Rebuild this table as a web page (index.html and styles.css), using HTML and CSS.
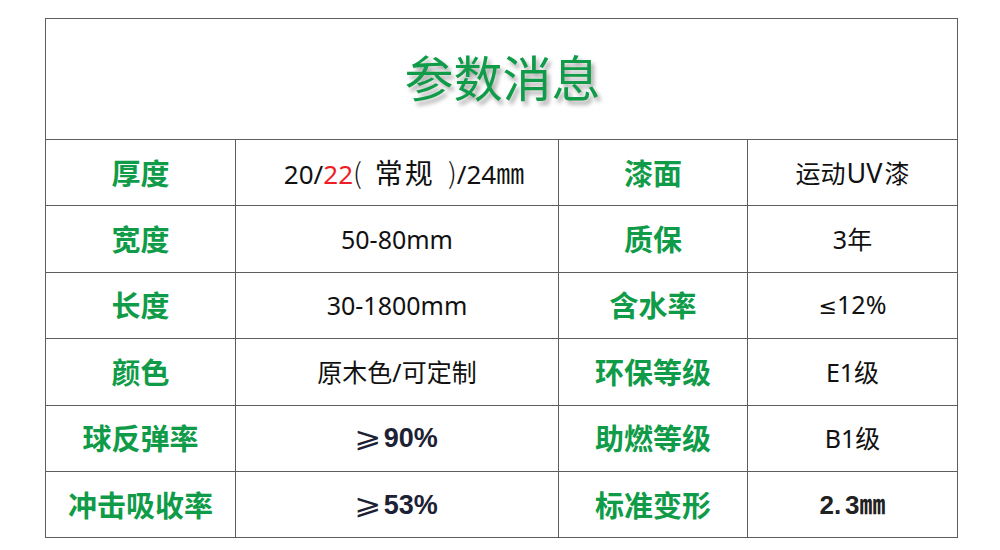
FILE: index.html
```html
<!DOCTYPE html>
<html lang="zh">
<head>
<meta charset="utf-8">
<title>参数消息</title>
<link rel="stylesheet" href="styles.css">
</head>
<body>
<table class="spec">
  <colgroup>
    <col class="c1"><col class="c2"><col class="c3"><col class="c4">
  </colgroup>
  <tr class="title-row"><td colspan="4" class="title">参数消息</td></tr>
  <tr class="row first">
    <td class="label">厚度</td>
    <td class="val val-cjk">20/<span class="red">22</span><span class="par">(</span><span class="gap"></span><span class="big">常规</span><span class="gap"></span><span class="par">)</span>/24<span class="mm">㎜</span></td>
    <td class="label">漆面</td>
    <td class="val">运动<span class="uv">UV</span>漆</td>
  </tr>
  <tr class="row">
    <td class="label">宽度</td>
    <td class="val">50-80mm</td>
    <td class="label">质保</td>
    <td class="val">3年</td>
  </tr>
  <tr class="row">
    <td class="label">长度</td>
    <td class="val">30-1800mm</td>
    <td class="label">含水率</td>
    <td class="val"><span class="le">≤</span>12%</td>
  </tr>
  <tr class="row">
    <td class="label">颜色</td>
    <td class="val">原木色/可定制</td>
    <td class="label">环保等级</td>
    <td class="val">E1级</td>
  </tr>
  <tr class="row">
    <td class="label">球反弹率</td>
    <td class="val val-bold"><span class="ge">⩾</span>90%</td>
    <td class="label">助燃等级</td>
    <td class="val">B1级</td>
  </tr>
  <tr class="row">
    <td class="label">冲击吸收率</td>
    <td class="val val-bold"><span class="ge">⩾</span>53%</td>
    <td class="label">标准变形</td>
    <td class="val val-dim">2.<span class="sp"></span>3㎜</td>
  </tr>
</table>
</body>
</html>
```

FILE: styles.css
```css
html, body {
  margin: 0;
  padding: 0;
  background: #ffffff;
}

body {
  padding: 18px 0 0 45px;
  font-family: "Noto Sans", "Noto Sans CJK SC", sans-serif;
}

.spec {
  border-collapse: collapse;
  table-layout: fixed;
  width: 912px;
}

.c1 { width: 190px; }
.c2 { width: 323px; }
.c3 { width: 189px; }
.c4 { width: 210px; }

.spec td {
  border: 1.5px solid #5e5e5e;
  text-align: center;
  vertical-align: middle;
  padding: 0;
  line-height: 30px;
}

.title-row td {
  height: 114px;
}

.spec td.title {
  font-family: "Noto Sans CJK SC", sans-serif;
  font-size: 49px;
  font-weight: 400;
  line-height: 50px;
  color: #0f9b48;
  text-shadow: 3px 4px 4px rgba(0, 0, 0, 0.35);
  padding: 0 0 6px 2px;
}

.row td {
  height: 63.4px;
}

.label {
  font-family: "Noto Sans CJK SC", sans-serif;
  font-size: 29px;
  font-weight: 700;
  color: #0f9b48;
}

.spec td.label {
  padding-bottom: 2px;
}

.val {
  font-size: 25px;
  color: #111111;
  font-family: "Noto Sans", "Noto Sans CJK SC", sans-serif;
}

.spec td.val-cjk {
  font-size: 26px;
  padding-left: 14px;
}

.big {
  font-family: "Noto Sans CJK SC", sans-serif;
  font-size: 28px;
  letter-spacing: 2px;
}

.mm {
  font-family: "Noto Sans CJK SC", sans-serif;
  font-size: 28px;
}

.uv {
  font-size: 27px;
  margin: 0 2px 0 1px;
}

.par {
  font-family: "Noto Sans CJK SC", sans-serif;
  font-weight: 300;
  font-size: 28px;
}

.gap {
  display: inline-block;
  width: 13px;
}

.red {
  color: #ee1c25;
}

.le {
  font-family: "DejaVu Sans", sans-serif;
  font-size: 22px;
}

.val-bold {
  font-family: "Liberation Sans Narrow", "Liberation Sans", sans-serif;
  font-weight: 700;
  font-size: 27px;
  color: #1c2133;
}

.ge {
  font-family: "DejaVu Sans", sans-serif;
  font-weight: 400;
  font-size: 28px;
  display: inline-block;
  transform: scaleX(1.15);
  margin-right: 4px;
}

.val-dim {
  font-family: "Liberation Sans", "Noto Sans CJK SC", sans-serif;
  font-size: 26px;
  font-weight: 700;
  color: #222222;
}

.sp {
  display: inline-block;
  width: 4px;
}
```
